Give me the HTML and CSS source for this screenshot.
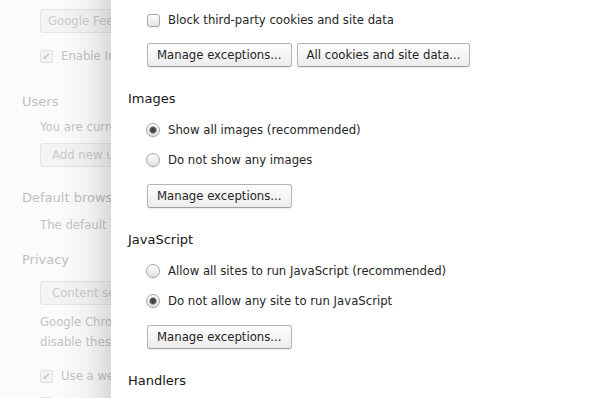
FILE: index.html
```html
<!DOCTYPE html>
<html lang="en">
<head>
    <meta charset="UTF-8">
    <title>Content settings</title>
    <link rel="stylesheet" href="styles.css">
</head>
<body>
    <div class="window">
        <!-- settings page behind the overlay, faded out -->
        <div class="backdrop">
            <div class="backdrop-inner">
                <div class="ghost-group first">
                    <button class="ghost-btn select">Google Feeling Lucky</button>
                    <div class="ghost-row"><span class="ghost-check">✔</span>Enable Instant for faster searching</div>
                </div>

                <h3 class="ghost-title users">Users</h3>
                <div class="ghost-group">
                    <p class="ghost-text near">You are currently the only Google Chrome user.</p>
                    <button class="ghost-btn add">Add new user...</button>
                </div>

                <h3 class="ghost-title">Default browser</h3>
                <div class="ghost-group">
                    <p class="ghost-text">The default browser is currently Google Chrome.</p>
                </div>

                <h3 class="ghost-title privacy">Privacy</h3>
                <div class="ghost-group">
                    <button class="ghost-btn content">Content settings...</button>
                    <p class="ghost-text">Google Chrome may use web services to improve your browsing experience. You may optionally<br>disable these services.</p>
                    <div class="ghost-row spaced"><span class="ghost-check">✔</span>Use a web service to help resolve navigation errors</div>
                    <div class="ghost-row"><span class="ghost-check">✔</span>Use a prediction service to help complete searches</div>
                </div>
            </div>
        </div>

        <div class="panel">
            <div class="option-row">
                <span class="check"></span>
                <span>Block third-party cookies and site data</span>
            </div>
            <div class="actions">
                <button class="btn">Manage exceptions...</button>
                <button class="btn">All cookies and site data...</button>
            </div>

            <div class="section">
                <h3>Images</h3>
                <div class="options">
                    <div class="option-row"><span class="radio checked"></span><span>Show all images (recommended)</span></div>
                    <div class="option-row"><span class="radio"></span><span>Do not show any images</span></div>
                </div>
                <div class="actions">
                    <button class="btn">Manage exceptions...</button>
                </div>
            </div>

            <div class="section">
                <h3>JavaScript</h3>
                <div class="options">
                    <div class="option-row"><span class="radio"></span><span>Allow all sites to run JavaScript (recommended)</span></div>
                    <div class="option-row"><span class="radio checked"></span><span>Do not allow any site to run JavaScript</span></div>
                </div>
                <div class="actions">
                    <button class="btn">Manage exceptions...</button>
                </div>
            </div>

            <div class="section">
                <h3>Handlers</h3>
            </div>
        </div>
    </div>
</body>
</html>
```

FILE: styles.css
```css
body {
    margin: 0;
    font-family: 'DejaVu Sans', 'Liberation Sans', sans-serif;
    font-size: 11.7px;
    color: #262626;
    background-color: #fff;
}
.window {
    display: flex;
    height: 398px;
    overflow: hidden;
}

/* faded page behind */
.backdrop {
    flex: none;
    width: 111px;
    overflow: hidden;
    background-color: #fbfbfb;
}
.backdrop-inner {
    width: 600px;
    padding: 9px 0 0 22px;
    color: #c4c4c4;
}
.ghost-group {
    margin-left: 18px;
}
.ghost-title {
    margin: 21px 0 0;
    font-size: 13px;
    font-weight: normal;
    line-height: 20px;
    color: #c0c0c0;
}
.ghost-title.users {
    margin-top: 26px;
}
.ghost-title.privacy {
    margin-top: 15px;
}
.ghost-text {
    margin: 7px 0 0;
    line-height: 20px;
}
.ghost-text.near {
    margin-top: 5px;
}
.ghost-btn {
    display: block;
    height: 24px;
    padding: 0 11px;
    font: inherit;
    color: #cbcbcb;
    background-color: #f4f4f4;
    border: 1px solid #e6e6e6;
    border-radius: 3px;
}
.ghost-btn.select {
    padding: 0 7px;
}
.ghost-btn.add {
    margin-top: 6px;
}
.ghost-btn.content {
    margin-top: 11px;
}
.ghost-row {
    display: flex;
    align-items: center;
    gap: 8px;
    height: 20px;
    margin-top: 13px;
}
.ghost-row.spaced {
    margin-top: 14px;
}
.ghost-row + .ghost-row {
    margin-top: 7px;
}
.ghost-check {
    display: flex;
    align-items: center;
    justify-content: center;
    width: 11px;
    height: 11px;
    font-size: 10px;
    color: #c8c8c8;
    background-color: #f4f4f4;
    border: 1px solid #e2e2e2;
    border-radius: 2px;
}

/* overlay panel */
.panel {
    position: relative;
    z-index: 1;
    flex: 1;
    padding: 10px 0 0 17px;
    background-color: #fff;
}
.panel::before {
    content: "";
    position: absolute;
    top: 0;
    bottom: 0;
    left: -52px;
    width: 52px;
    background: linear-gradient(to right, rgba(0, 0, 0, 0), rgba(0, 0, 0, 0.035) 55%, rgba(0, 0, 0, 0.13));
}
.section {
    margin-top: 21px;
}
.section h3 {
    margin: 0;
    font-size: 13px;
    font-weight: normal;
    line-height: 21px;
    color: #161616;
}
.options {
    display: flex;
    flex-direction: column;
    gap: 10px;
    margin-top: 11px;
}
.option-row {
    display: flex;
    align-items: center;
    gap: 8px;
    height: 20px;
    margin-left: 19px;
}
.check {
    width: 11px;
    height: 11px;
    border: 1px solid #a9a9a9;
    border-radius: 3px;
    background: linear-gradient(#fdfdfd, #e4e4e4);
    box-shadow: 0 1px 1px rgba(0, 0, 0, 0.08);
}
.radio {
    width: 12px;
    height: 12px;
    margin-left: -1px;
    border: 1px solid #a6a6a6;
    border-radius: 50%;
    background: linear-gradient(#fdfdfd, #e2e2e2);
    box-shadow: 0 1px 1px rgba(0, 0, 0, 0.08);
}
.radio.checked {
    background: radial-gradient(circle, #3c3c3c 0, #4a4a4a 2.4px, #9a9a9a 3.4px, rgba(255, 255, 255, 0) 4.3px), linear-gradient(#fdfdfd, #e2e2e2);
}
.actions {
    display: flex;
    gap: 5px;
    margin: 13px 0 0 19px;
}
.section .actions {
    margin-top: 14px;
}
.btn {
    height: 24px;
    padding: 0 9px;
    font: inherit;
    color: #262626;
    background: linear-gradient(#fefefe, #ececec);
    border: 1px solid #b4b4b4;
    border-bottom-color: #9f9f9f;
    border-radius: 3px;
    box-shadow: 0 1px 1px rgba(0, 0, 0, 0.08);
}
```
